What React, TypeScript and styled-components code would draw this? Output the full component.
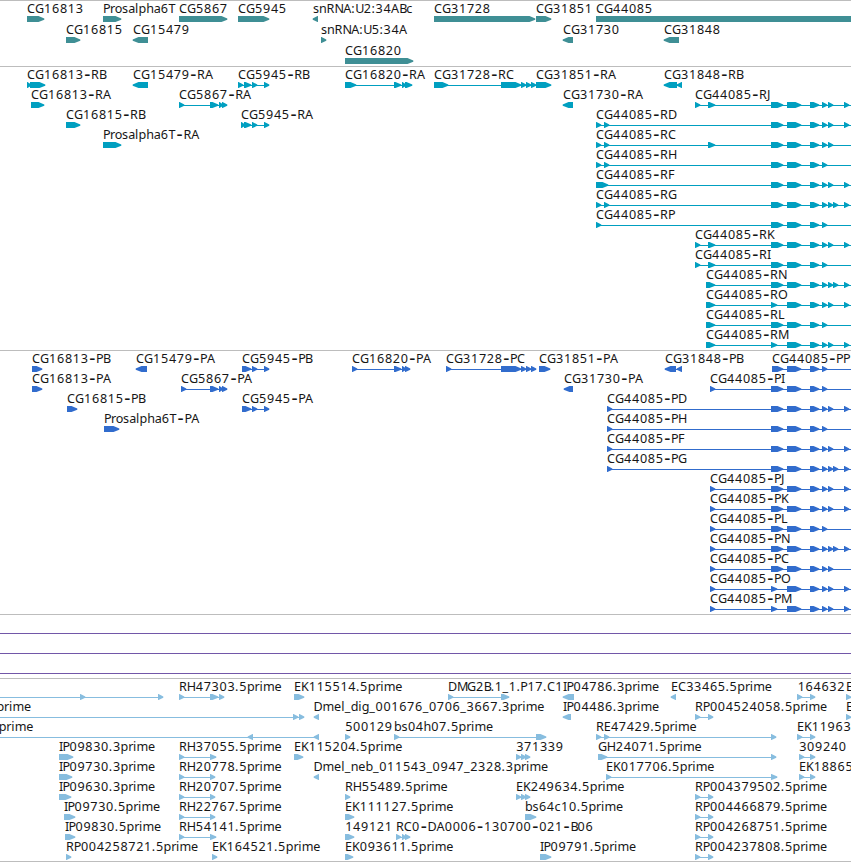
import styled, { createGlobalStyle } from "styled-components";

const GlobalStyle = createGlobalStyle`
  body {
    margin: 0;
    background: #fff;
    overflow: hidden;
  }
`;

const Browser = styled.main`
  display: flex;
  flex-direction: column;
  width: 851px;
  height: 862px;
  overflow: hidden;
`;

const TrackSection = styled.section<{ $color: string; $gap: number }>`
  flex: none;
  padding-bottom: ${({ $gap }) => $gap}px;
  border-top: 1px solid #bdbdbd;
  color: ${({ $color }) => $color};
`;

const Row = styled.svg<{ $height: number }>`
  display: block;
  width: 851px;
  height: ${({ $height }) => $height}px;
  overflow: visible;
  shape-rendering: crispEdges;
`;

const Label = styled.text`
  font-family: "Noto Sans", "DejaVu Sans", sans-serif;
  font-size: 12.6px;
  fill: #161616;
  white-space: pre;
`;

const Hyphen = styled.tspan`
  font-size: 19px;
`;

const Bottom = styled.div`
  flex: none;
  height: 1px;
  background: #bdbdbd;
`;

type Span = [number, number];
type Feature = {
  name?: string;
  x: number;
  blocks?: Span[];
  line?: Span;
  reverse?: boolean;
};
type TrackData = {
  id: string;
  color: string;
  rowHeight: number;
  gap: number;
  rows: Feature[][];
};

// advance of every letter, digits take DIGIT
const DIGIT = 7.9;
const ADVANCE: Record<string, number> = {
  "-": 7.7, ".": 3.9, ":": 3.9, "_": 6,
  A: 8.1, B: 7, C: 8.1, D: 9, E: 6.9, F: 6.6, G: 8.8, H: 8.8, I: 3.4, J: 3.6,
  K: 7.7, L: 6.6, M: 10, N: 8.8, O: 9.2, P: 6.9, R: 7.8, T: 7.2, U: 8.3,
  a: 6.9, b: 7.6, c: 6.4, d: 7.6, e: 7.2, g: 7.5, h: 7.5, i: 3.5, l: 3.5,
  m: 11.5, n: 7.5, o: 7.3, p: 7.6, r: 4.9, s: 6.1,
};

// splits a name at its hyphens and gives each letter its x
const letterRuns = (text: string, start: number) => {
  let x = start;
  return text.split(/(-)/).map((run) => ({
    run,
    xs: run
      .split("")
      .map((ch) => {
        const nudge = ch === "-" ? 0.9 : /\d/.test(ch) ? 0.2 : 0;
        const at = x + nudge;
        x += ADVANCE[ch] ?? DIGIT;
        return at.toFixed(1);
      })
      .join(" "),
  }));
};

const f = (name: string, x: number, ...blocks: Span[]): Feature => ({
  name,
  x,
  blocks,
  line: blocks.length > 1 ? [blocks[0][0], blocks[blocks.length - 1][1]] : undefined,
});
const r = (name: string, x: number, ...blocks: Span[]): Feature => ({
  ...f(name, x, ...blocks),
  reverse: true,
});

// CG44085 isoforms share their right-hand exons
const TAILS: Record<string, Span[]> = {
  a: [[822, 827]],
  b: [[822, 827], [828, 833]],
  c: [[822, 827], [828, 833], [844, 849]],
  d: [[822, 827], [828, 833], [833, 838], [844, 849]],
};
const iso = (
  name: string,
  tail: string,
  head: Span[],
  first: Span = [771, 783]
): Feature => ({
  name,
  x: head.length ? head[0][0] : first[0],
  blocks: [...head, first, [787, 801], [810, 819], ...TAILS[tail]],
  line: [head.length ? head[0][0] : first[0], 851],
});

const SHORT: Span = [771, 777];
const HEAD_D: Span[] = [[596, 601], [604, 609]];
const HEAD_K: Span[] = [[695, 700], [708, 715]];
const HEAD_N: Span[] = [[706, 715]];
const HEAD_PD: Span[] = [[607, 612]];
const HEAD_PI: Span[] = [[710, 715]];

const TRACKS: TrackData[] = [
  {
    id: "gene",
    color: "#3f8f95",
    rowHeight: 21,
    gap: 2,
    rows: [
      [
        f("CG16813", 27, [27, 44]),
        f("Prosalpha6T", 103, [103, 121]),
        f("CG5867", 179, [179, 227]),
        f("CG5945", 238, [238, 269]),
        r("snRNA:U2:34ABc", 313, [313, 318]),
        f("CG31728", 434, [434, 535]),
        f("CG31851", 536, [536, 551]),
        f("CG44085", 596, [596, 870]),
      ],
      [
        f("CG16815", 66, [66, 80]),
        r("CG15479", 133, [133, 148]),
        f("snRNA:U5:34A", 321, [321, 326]),
        r("CG31730", 563, [563, 573]),
        r("CG31848", 664, [664, 679]),
      ],
      [f("CG16820", 345, [345, 413])],
    ],
  },
  {
    id: "transcript",
    color: "#009fc0",
    rowHeight: 20,
    gap: 3,
    rows: [
      [
        f("CG16813-RB", 27, [27, 31], [30, 45]),
        r("CG15479-RA", 133, [133, 148]),
        f("CG5945-RB", 238, [238, 243], [244, 251], [252, 257], [264, 269]),
        f("CG16820-RA", 345, [345, 356], [394, 401], [402, 406], [405, 412]),
        f("CG31728-RC", 434, [434, 448], [501, 521], [521, 526], [526, 531], [531, 536]),
        f("CG31851-RA", 536, [536, 551]),
        r("CG31848-RB", 664, [664, 677], [677, 682]),
      ],
      [
        f("CG16813-RA", 31, [31, 44]),
        f("CG5867-RA", 179, [179, 184], [210, 218], [219, 223], [222, 227]),
        r("CG31730-RA", 563, [563, 573]),
        iso("CG44085-RJ", "c", HEAD_K),
      ],
      [
        f("CG16815-RB", 66, [66, 80]),
        f("CG5945-RA", 241, [241, 245], [244, 251], [252, 257], [264, 269]),
        iso("CG44085-RD", "c", HEAD_D),
      ],
      [
        f("Prosalpha6T-RA", 103, [103, 121]),
        iso("CG44085-RC", "b", [...HEAD_D, [708, 715]]),
      ],
      [iso("CG44085-RH", "a", HEAD_D)],
      [iso("CG44085-RF", "c", [[596, 608]])],
      [iso("CG44085-RG", "d", HEAD_D)],
      [iso("CG44085-RP", "a", [[596, 601]])],
      [iso("CG44085-RK", "c", HEAD_K)],
      [iso("CG44085-RI", "a", HEAD_K)],
      [iso("CG44085-RN", "d", HEAD_N)],
      [iso("CG44085-RO", "c", HEAD_N, SHORT)],
      [iso("CG44085-RL", "a", HEAD_N)],
      [iso("CG44085-RM", "c", HEAD_N, SHORT)],
    ],
  },
  {
    id: "protein",
    color: "#316ccd",
    rowHeight: 20,
    gap: 3,
    rows: [
      [
        f("CG16813-PB", 32, [32, 42]),
        r("CG15479-PA", 136, [136, 147]),
        f("CG5945-PB", 242, [242, 251], [252, 257], [264, 269]),
        f("CG16820-PA", 352, [352, 357], [394, 401], [402, 406], [405, 410]),
        f("CG31728-PC", 446, [446, 451], [501, 521], [521, 526], [526, 531], [531, 536]),
        f("CG31851-PA", 539, [539, 550]),
        r("CG31848-PB", 665, [665, 676], [677, 682]),
        iso("CG44085-PP", "a", [], [772, 783]),
      ],
      [
        f("CG16813-PA", 32, [32, 42]),
        f("CG5867-PA", 181, [181, 186], [210, 218], [219, 223], [222, 227]),
        r("CG31730-PA", 564, [564, 573]),
        iso("CG44085-PI", "a", HEAD_PI),
      ],
      [
        f("CG16815-PB", 67, [67, 77]),
        f("CG5945-PA", 242, [242, 251], [252, 257], [264, 269]),
        iso("CG44085-PD", "c", HEAD_PD),
      ],
      [f("Prosalpha6T-PA", 104, [104, 119]), iso("CG44085-PH", "a", HEAD_PD)],
      [iso("CG44085-PF", "c", HEAD_PD)],
      [iso("CG44085-PG", "d", HEAD_PD)],
      [iso("CG44085-PJ", "c", HEAD_PI)],
      [iso("CG44085-PK", "c", HEAD_PI)],
      [iso("CG44085-PL", "a", HEAD_PI)],
      [iso("CG44085-PN", "d", HEAD_PI)],
      [iso("CG44085-PC", "b", HEAD_PI)],
      [iso("CG44085-PO", "c", HEAD_PI, SHORT)],
      [iso("CG44085-PM", "c", HEAD_PI, SHORT)],
    ],
  },
  {
    id: "intron",
    color: "#7257a8",
    rowHeight: 20,
    gap: 3,
    rows: [
      [{ x: 0, line: [0, 851] }],
      [{ x: 0, line: [0, 851] }],
      [{ x: 0, line: [0, 851] }],
    ],
  },
  {
    id: "est",
    color: "#87bddf",
    rowHeight: 20,
    gap: 2,
    rows: [
      [
        { x: 0, blocks: [[80, 85], [158, 163]], line: [0, 163] },
        f("RH47303.5prime", 179, [179, 184], [210, 218], [219, 224]),
        f("EK115514.5prime", 294, [294, 304]),
        f("DMG2B.1_1.P17.C1", 448, [448, 453], [501, 509]),
        r("IP04786.3prime", 563, [563, 574]),
        r("EC33465.5prime", 671, [671, 676]),
        f("164632", 797.5, [797, 802], [810, 815]),
        f("E", 846, [846, 851]),
      ],
      [
        { name: "prime", x: -3.5, blocks: [[293, 298], [299, 304]], line: [0, 304] },
        r("Dmel_dig_001676_0706_3667.3prime", 313.5, [314, 319]),
        r("IP04486.3prime", 563, [563, 571]),
        f("RP004524058.5prime", 695, [695, 700], [708, 713]),
        f("E", 846, [846, 851]),
      ],
      [
        { name: "prime", x: -1.3, blocks: [[248, 253], [314, 319]], line: [0, 319], reverse: true },
        f("500129", 345, [345, 350]),
        f("bs04h07.5prime", 394, [394, 399], [536, 546]),
        f("RE47429.5prime", 596, [596, 601], [604, 609], [771, 776]),
        f("EK119635.5prime", 797, [797, 802], [810, 815]),
      ],
      [
        f("IP09830.3prime", 59, [59, 73]),
        f("RH37055.5prime", 179, [179, 184], [210, 216]),
        f("EK115204.5prime", 294, [294, 303]),
        f("371339", 516, [516, 521], [521, 526], [525, 530]),
        f("GH24071.5prime", 598, [598, 607], [771, 776]),
        f("309240", 799, [799, 804], [810, 815]),
      ],
      [
        f("IP09730.3prime", 59, [59, 72]),
        f("RH20778.5prime", 179, [179, 184], [210, 215]),
        r("Dmel_neb_011543_0947_2328.3prime", 313.5, [314, 319]),
        f("EK017706.5prime", 606, [606, 611], [771, 777]),
        f("EK188655.5prime", 799, [799, 804], [810, 815]),
      ],
      [
        f("IP09630.3prime", 59, [59, 71]),
        f("RH20707.5prime", 179, [179, 184], [210, 215]),
        f("RH55489.5prime", 345, [345, 350]),
        f("EK249634.5prime", 516, [516, 521], [521, 526], [525, 530]),
        f("RP004379502.5prime", 695, [695, 700], [708, 713]),
      ],
      [
        f("IP09730.5prime", 64, [64, 75]),
        f("RH22767.5prime", 179, [179, 184], [210, 215]),
        f("EK111127.5prime", 345, [345, 354]),
        f("bs64c10.5prime", 525, [525, 536]),
        f("RP004466879.5prime", 695, [695, 700], [708, 713]),
      ],
      [
        f("IP09830.5prime", 65, [65, 75]),
        f("RH54141.5prime", 179, [179, 184], [210, 216]),
        f("149121", 345, [345, 354]),
        f("RC0-DA0006-130700-021-B06", 396, [396, 401], [402, 406], [405, 410]),
        f("RP004268751.5prime", 695, [695, 700], [708, 713]),
      ],
      [
        f("RP004258721.5prime", 66, [66, 71]),
        f("EK164521.5prime", 212, [212, 217]),
        f("EK093611.5prime", 345, [345, 353]),
        f("IP09791.5prime", 540, [540, 551]),
        f("RP004237808.5prime", 695, [695, 700], [708, 713]),
      ],
    ],
  },
];

function Block({ span, reverse }: { span: Span; reverse?: boolean }) {
  const [start, end] = span;
  const tip = Math.min(5.5, end - start - 0.5);
  const d = reverse
    ? `M${end} 15H${start + tip}L${start - 0.3} 17.6V18.8L${start + tip} 21H${end}Z`
    : `M${start} 15H${end - tip}L${end + 0.3} 17.6V18.8L${end - tip} 21H${start}Z`;
  return <path d={d} fill="currentColor" shapeRendering="auto" />;
}

function FeatureGlyph({ feature }: { feature: Feature }) {
  const { name, x, blocks = [], line, reverse } = feature;
  return (
    <g>
      {line && (
        <rect x={line[0]} y={18} width={line[1] - line[0]} height={1} fill="currentColor" />
      )}
      {blocks.map((span) => (
        <Block key={span[0]} span={span} reverse={reverse} />
      ))}
      {name && (
        <Label y={12}>
          {letterRuns(name, x).map(({ run, xs }, i) =>
            run === "-" ? (
              <Hyphen key={i} x={xs} y={13.5}>
                {run}
              </Hyphen>
            ) : (
              <tspan key={i} x={xs} y={12}>
                {run}
              </tspan>
            )
          )}
        </Label>
      )}
    </g>
  );
}

function Track({ track }: { track: TrackData }) {
  return (
    <TrackSection $color={track.color} $gap={track.gap}>
      {track.rows.map((features, i) => (
        <Row key={i} $height={track.rowHeight}>
          {features.map((feature, j) => (
            <FeatureGlyph key={j} feature={feature} />
          ))}
        </Row>
      ))}
    </TrackSection>
  );
}

function App() {
  return (
    <>
      <GlobalStyle />
      <Browser>
        {TRACKS.map((track) => (
          <Track key={track.id} track={track} />
        ))}
        <Bottom />
      </Browser>
    </>
  );
}

export default App;
